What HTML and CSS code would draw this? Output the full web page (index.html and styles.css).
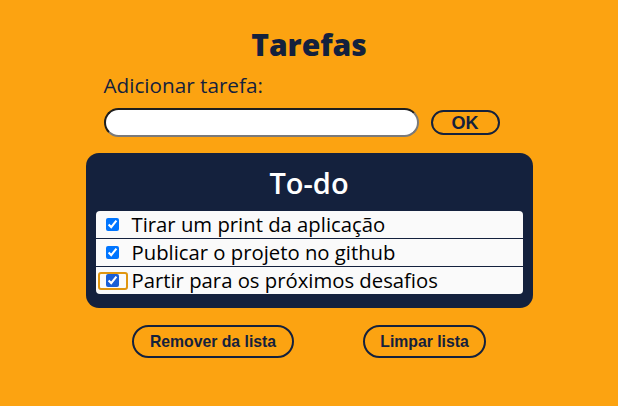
FILE: index.html
```html
<!DOCTYPE html>
<html lang="pt-BR">
<head>
<meta charset="utf-8">
<title>Tarefas</title>
<link rel="stylesheet" href="styles.css">
</head>
<body>
<main class="app">
  <h1 class="title">Tarefas</h1>
  <form class="add-form" onsubmit="return false">
    <label class="add-label" for="nova">Adicionar tarefa:</label>
    <div class="add-row">
      <input id="nova" class="add-input" type="text">
      <button class="ok-btn" type="button">OK</button>
    </div>
  </form>
  <section class="panel">
    <h2 class="panel-title">To-do</h2>
    <ul class="todo-list">
      <li class="todo-item"><span class="check-wrap"><input type="checkbox" checked></span><span class="todo-text">Tirar um print da aplicação</span></li>
      <li class="todo-item"><span class="check-wrap"><input type="checkbox" checked></span><span class="todo-text">Publicar o projeto no github</span></li>
      <li class="todo-item"><span class="check-wrap focused"><input type="checkbox" checked></span><span class="todo-text">Partir para os próximos desafios</span></li>
    </ul>
  </section>
  <div class="actions">
    <button class="action-btn remove" type="button">Remover da lista</button>
    <button class="action-btn clear" type="button">Limpar lista</button>
  </div>
</main>
</body>
</html>
```

FILE: styles.css
```css
html, body {
  margin: 0;
  padding: 0;
}
body {
  background: #fca311;
  font-family: "Open Sans", "Noto Sans", sans-serif;
  color: #14213d;
  width: 618px;
  height: 406px;
  overflow: hidden;
}
.app {
  width: 447px;
  margin: 0 auto;
  padding-top: 25px;
  display: flex;
  flex-direction: column;
}
.title {
  margin: 0;
  text-align: center;
  font-size: 30px;
  font-weight: 800;
  line-height: 40px;
  color: #14213d;
}
.add-form {
  padding-left: 18px;
  margin-top: 6px;
  display: flex;
  flex-direction: column;
}
.add-label {
  font-size: 20.7px;
  font-weight: 500;
  line-height: 28px;
  color: #14213d;
}
.add-row {
  display: flex;
  align-items: center;
  gap: 12px;
  margin-top: 9px;
}
.add-input {
  box-sizing: border-box;
  width: 315px;
  height: 29px;
  border-radius: 15px;
  border: 2px solid;
  border-color: #1e1e1e #7a7a7a #7a7a7a #1e1e1e;
  background: #fff;
  padding: 0 10px;
  outline: none;
}
.ok-btn {
  box-sizing: border-box;
  width: 69px;
  height: 25px;
  border: 2px solid #14213d;
  border-radius: 13px;
  background: transparent;
  color: #14213d;
  font-family: "Liberation Sans", Arial, sans-serif;
  font-weight: 700;
  font-size: 18px;
  padding: 0;
  line-height: 20px;
}
.panel {
  margin-top: 16px;
  background: #14213d;
  border-radius: 13px;
  padding: 11px 10px 14px;
  height: 155px;
  box-sizing: border-box;
}
.panel-title {
  margin: 0;
  text-align: center;
  color: #ffffff;
  font-size: 29px;
  font-weight: 600;
  line-height: 38px;
}
.todo-list {
  list-style: none;
  margin: 9px 0 0;
  padding: 0;
  background: #fafafa;
  border-radius: 4px;
  overflow: hidden;
}
.todo-item {
  display: flex;
  align-items: center;
  height: 27px;
  border-bottom: 1px solid #14213d;
  font-size: 20.3px;
  color: #000;
}
.todo-item:last-child {
  border-bottom: none;
}
.check-wrap {
  box-sizing: border-box;
  width: 30px;
  height: 18px;
  margin-left: 2px;
  margin-right: 4px;
  display: flex;
  align-items: center;
  justify-content: center;
  border: 2px solid transparent;
  border-radius: 3px;
}
.check-wrap.focused {
  border-color: #e0960f;
}
.check-wrap input {
  margin: 0;
  width: 13px;
  height: 13px;
  accent-color: #0075ff;
}
.check-wrap.focused input {
  accent-color: #1a5fd6;
}
.todo-text {
  line-height: 26px;
  margin-top: -1px;
}
.actions {
  display: flex;
  justify-content: center;
  gap: 69px;
  margin-top: 17px;
}
.action-btn {
  box-sizing: border-box;
  height: 33px;
  border: 2px solid #14213d;
  border-radius: 17px;
  background: transparent;
  color: #14213d;
  font-family: "Liberation Sans", Arial, sans-serif;
  font-weight: 700;
  font-size: 15.75px;
  padding: 0;
}
.action-btn.remove {
  width: 162px;
}
.action-btn.clear {
  width: 123px;
}
```
